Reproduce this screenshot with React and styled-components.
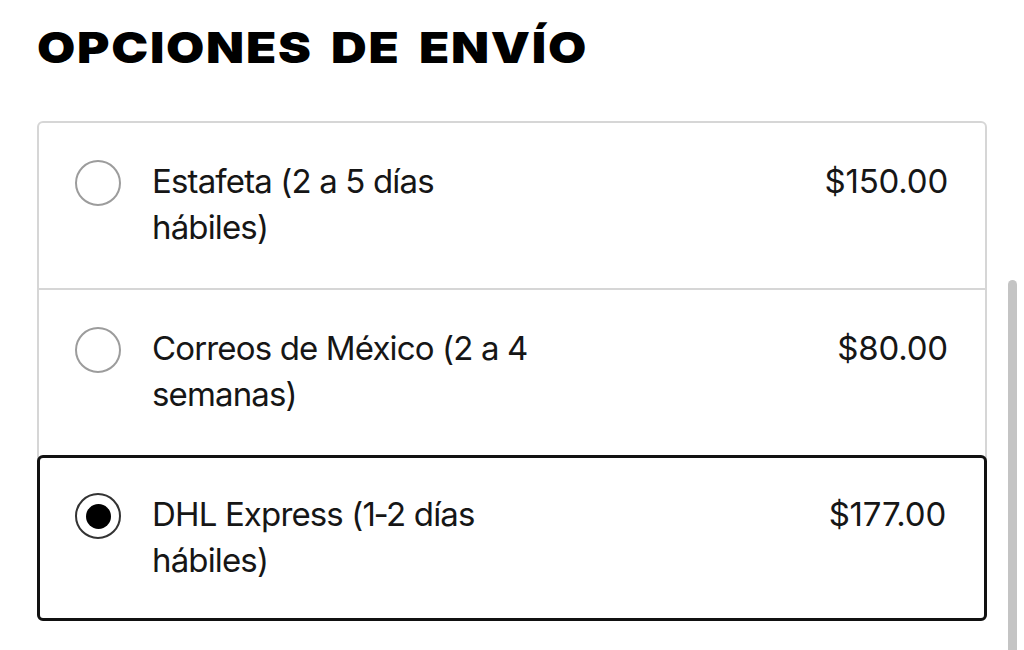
import React, { useState } from "react";
import styled, { createGlobalStyle } from "styled-components";

const GlobalStyle = createGlobalStyle`
  html, body {
    margin: 0;
    padding: 0;
    background: #ffffff;
    font-family: Inter, "Noto Sans", sans-serif;
    color: #161616;
  }
`;

const Page = styled.div`
  padding: 26px 37px 0 37px;
  height: 650px;
  box-sizing: border-box;
  overflow: hidden;
`;

const Title = styled.h1`
  margin: 0 0 52px 0;
  font-family: Inter, "Noto Sans", sans-serif;
  font-size: 43px;
  line-height: 43px;
  font-weight: 900;
  letter-spacing: 1.5px;
  word-spacing: 6px;
  color: #000;
  transform: scaleX(1.15);
  transform-origin: left center;
  white-space: nowrap;
`;

const Card = styled.div`
  border: 2px solid #d6d6d6;
  border-radius: 6px;
`;

const Row = styled.label`
  display: flex;
  align-items: flex-start;
  padding: 35px 37px 38px 36px;
  border-top: 2px solid #d6d6d6;
  cursor: pointer;

  &:first-child {
    border-top: none;
    padding-top: 35px;
  }

  ${(p) =>
    p.$selected &&
    `
    border: 3px solid #111;
    border-radius: 6px;
    margin: 0 -2px -2px -2px;
    padding: 33px 38px 35px 35px;
  `}
`;

const Radio = styled.span`
  flex: none;
  width: 46px;
  height: 46px;
  margin-top: 2px;
  box-sizing: border-box;
  border-radius: 50%;
  border: 2px solid ${(p) => (p.$checked ? "#333" : "#9c9c9c")};
  display: flex;
  align-items: center;
  justify-content: center;

  &::after {
    content: "";
    width: 25px;
    height: 25px;
    border-radius: 50%;
    background: #000;
    display: ${(p) => (p.$checked ? "block" : "none")};
  }
`;

const Label = styled.span`
  margin-left: 31px;
  max-width: 392px;
  font-size: 33px;
  line-height: 46px;
  font-weight: 400;
  letter-spacing: -0.85px;
  color: #161616;
`;

const Price = styled.span`
  margin-left: auto;
  font-size: 33px;
  line-height: 46px;
  letter-spacing: -0.2px;
  color: #161616;
`;

const ScrollThumb = styled.div`
  position: fixed;
  right: 7px;
  top: 280px;
  bottom: -10px;
  width: 9px;
  border-radius: 5px;
  background: #c4c4c4;
`;

const options = [
  { id: "estafeta", label: "Estafeta (2 a 5 días hábiles)", price: "$150.00" },
  { id: "correos", label: "Correos de México (2 a 4 semanas)", price: "$80.00" },
  { id: "dhl", label: "DHL Express (1‑2 días hábiles)", price: "$177.00" },
];

export default function App() {
  const [selected, setSelected] = useState("dhl");

  return (
    <Page>
      <GlobalStyle />
      <Title>OPCIONES DE ENVÍO</Title>
      <Card>
        {options.map((o) => (
          <Row
            key={o.id}
            $selected={selected === o.id}
            onClick={() => setSelected(o.id)}
          >
            <Radio $checked={selected === o.id} />
            <Label>{o.label}</Label>
            <Price>{o.price}</Price>
          </Row>
        ))}
      </Card>
      <ScrollThumb />
    </Page>
  );
}
